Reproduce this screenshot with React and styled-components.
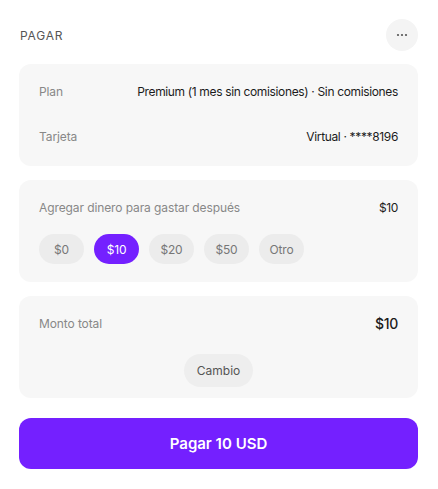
import React, { useState } from 'react'
import styled, { createGlobalStyle } from 'styled-components'

const GlobalStyle = createGlobalStyle`
  * { box-sizing: border-box; }
  body {
    margin: 0;
    background: #ffffff;
    font-family: Inter, "Noto Sans", sans-serif;
    color: #1a1a1a;
  }
`

const amounts = ['$0', '$10', '$20', '$50', 'Otro']

export default function App() {
  const [selected, setSelected] = useState('$10')
  const amount = selected === 'Otro' ? '0' : selected.replace('$', '')

  return (
    <>
      <GlobalStyle />
      <Page>
        {/* Header */}
        <Header>
          <Title>PAGAR</Title>
          <MoreButton aria-label="Más opciones">
            <svg width="12" height="4" viewBox="0 0 12 4">
              <circle cx="2" cy="2" r="1.1" fill="#555" />
              <circle cx="6" cy="2" r="1.1" fill="#555" />
              <circle cx="10" cy="2" r="1.1" fill="#555" />
            </svg>
          </MoreButton>
        </Header>

        {/* Plan details */}
        <Card bottom={20}>
          <Row>
            <Label>Plan</Label>
            <Value>Premium (1 mes sin comisiones) · Sin comisiones</Value>
          </Row>
          <Row>
            <Label>Tarjeta</Label>
            <Value>Virtual · ****8196</Value>
          </Row>
        </Card>

        {/* Top up */}
        <Card bottom={18}>
          <Row>
            <Label>Agregar dinero para gastar después</Label>
            <Value>${amount}</Value>
          </Row>
          <Chips>
            {amounts.map((a) => (
              <Chip key={a} active={a === selected} onClick={() => setSelected(a)}>
                {a}
              </Chip>
            ))}
          </Chips>
        </Card>

        {/* Total */}
        <Card bottom={11}>
          <Row>
            <Label>Monto total</Label>
            <Total>${amount}</Total>
          </Row>
          <Center>
            <ChangeButton>Cambio</ChangeButton>
          </Center>
        </Card>

        <PayButton>Pagar {amount} USD</PayButton>
      </Page>
    </>
  )
}

const Page = styled.div`
  width: 438px;
  padding: 19px 20px 0 19px;
  display: flex;
  flex-direction: column;
`

const Header = styled.header`
  display: flex;
  align-items: center;
  justify-content: space-between;
  height: 32px;
  margin-bottom: 13px;
`

const Title = styled.h1`
  margin: 0 0 0 1px;
  font-size: 12px;
  font-weight: 400;
  letter-spacing: 0.8px;
  color: #555;
`

const MoreButton = styled.button`
  width: 32px;
  height: 32px;
  border-radius: 50%;
  border: none;
  background: #f4f4f4;
  display: grid;
  place-content: center;
  padding: 0;
  cursor: pointer;
`

const Card = styled.section`
  background: #f7f7f7;
  border-radius: 12px;
  padding: 17px 20px ${(p) => p.bottom}px;
  height: 102px;
  margin-bottom: 14px;
  display: flex;
  flex-direction: column;
  justify-content: space-between;
`

const Row = styled.div`
  display: flex;
  align-items: center;
  justify-content: space-between;
  height: 20px;
`

const Label = styled.span`
  font-size: 12px;
  letter-spacing: -0.1px;
  color: #888;
`

const Value = styled.span`
  font-size: 12px;
  letter-spacing: -0.35px;
  color: #1c1c1c;
`

const Total = styled.span`
  font-size: 14px;
  font-weight: 500;
  letter-spacing: -0.3px;
  color: #1c1c1c;
`

const Chips = styled.div`
  display: flex;
  gap: 10px;
`

const Chip = styled.button`
  height: 30px;
  width: 45px;
  padding: 0;
  border: none;
  border-radius: 15px;
  font-family: inherit;
  font-size: 12px;
  letter-spacing: -0.2px;
  background: ${(p) => (p.active ? '#7420ff' : '#ececec')};
  color: ${(p) => (p.active ? '#ffffff' : '#777')};
  cursor: pointer;
`

const Center = styled.div`
  display: flex;
  justify-content: center;
`

const ChangeButton = styled.button`
  height: 33px;
  padding: 0 13px;
  border: none;
  border-radius: 16.5px;
  background: #eeeeee;
  font-family: inherit;
  font-size: 12px;
  color: #555;
  cursor: pointer;
`

const PayButton = styled.button`
  margin-top: 6px;
  height: 51px;
  border: none;
  border-radius: 12px;
  background: #7420ff;
  color: #fff;
  font-family: inherit;
  font-size: 15px;
  font-weight: 600;
  cursor: pointer;
`
